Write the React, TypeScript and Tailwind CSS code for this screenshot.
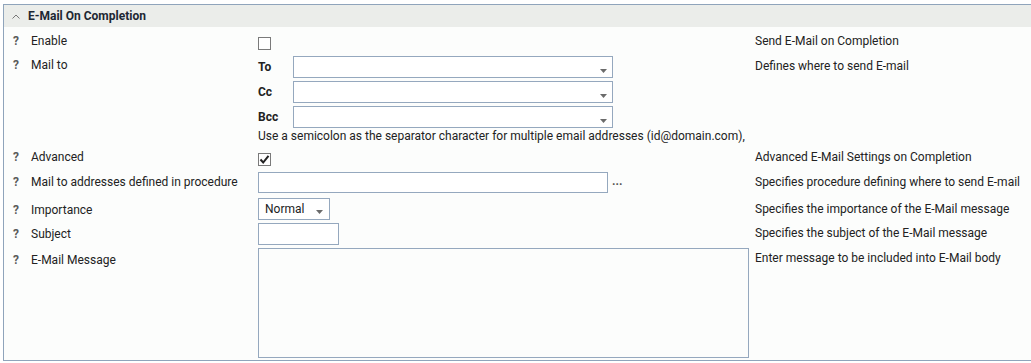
import React from "react";

const inputBorder = "border border-[#95a8be]";

function Caret({ className = "" }: { className?: string }) {
  return (
    <svg width="7" height="4" viewBox="0 0 7 4" className={className}>
      <polygon points="0,0 7,0 3.5,4" fill="#6b6b6b" />
    </svg>
  );
}

function Q() {
  return <span className="w-[18px] shrink-0 font-bold text-[#5a5a5a]">?</span>;
}

function Label({ text, pt }: { text: string; pt: string }) {
  return (
    <div className={`w-[254px] shrink-0 flex pl-[9px] ${pt}`}>
      <Q />
      <span>{text}</span>
    </div>
  );
}

function Checkbox({ checked }: { checked?: boolean }) {
  return (
    <div className="w-[13px] h-[13px] border border-[#7a7a7a] bg-white flex items-center justify-center">
      {checked && (
        <svg width="11" height="11" viewBox="0 0 11 11">
          <polyline points="1.5,5.5 4.2,8.5 9.5,1.8" fill="none" stroke="#222" strokeWidth="2" />
        </svg>
      )}
    </div>
  );
}

function Combo() {
  return (
    <div className={`w-[320px] h-[22px] ${inputBorder} bg-white flex items-end justify-end pr-[5px] pb-[4px]`}>
      <Caret />
    </div>
  );
}

function Desc({ text, pt }: { text: string; pt: string }) {
  return <div className={`flex-1 ${pt}`}>{text}</div>;
}

export default function App() {
  return (
    <div
      className="w-[1031px] h-[363px] bg-white pt-[4px] pl-[3px] text-[12px] leading-[16px] text-[#222]"
      style={{ fontFamily: "Roboto, 'Liberation Sans', sans-serif" }}
    >
      <div className="border-t border-l border-b border-[#8fa4bb] bg-[#fcfdfc]">
        <div className="h-[22px] bg-[#ebedea] flex items-center pl-[8px]">
          <svg width="8" height="5" viewBox="0 0 8 5" className="mr-[8px] mt-[1px]">
            <polyline points="0.5,4.5 4,1 7.5,4.5" fill="none" stroke="#777" strokeWidth="1" />
          </svg>
          <span className="font-bold text-[#1d2733]">E-Mail On Completion</span>
        </div>

        {/* Enable */}
        <div className="h-[26px] flex">
          <Label text="Enable" pt="pt-[6px]" />
          <div className="w-[497px] shrink-0 pt-[10px]">
            <Checkbox />
          </div>
          <Desc text="Send E-Mail on Completion" pt="pt-[6px]" />
        </div>

        {/* Mail to */}
        <div className="h-[92px] flex">
          <Label text="Mail to" pt="pt-[4px]" />
          <div className="w-[497px] shrink-0 pt-[3px] flex flex-col">
            <div className="flex flex-col gap-[3px]">
              {["To", "Cc", "Bcc"].map((l) => (
                <div key={l} className="flex items-center">
                  <span className="w-[35px] font-bold">{l}</span>
                  <Combo />
                </div>
              ))}
            </div>
            <div className="whitespace-nowrap">
              Use a semicolon as the separator character for multiple email addresses (id@domain.com),
            </div>
          </div>
          <Desc text="Defines where to send E-mail" pt="pt-[5px]" />
        </div>

        {/* Advanced */}
        <div className="h-[25px] flex">
          <Label text="Advanced" pt="pt-[4px]" />
          <div className="w-[497px] shrink-0 pt-[8px]">
            <Checkbox checked />
          </div>
          <Desc text="Advanced E-Mail Settings on Completion" pt="pt-[4px]" />
        </div>

        {/* Mail to addresses */}
        <div className="h-[27px] flex">
          <Label text="Mail to addresses defined in procedure" pt="pt-[4px]" />
          <div className="w-[497px] shrink-0 pt-[2px] flex items-start">
            <div className={`w-[350px] h-[21px] ${inputBorder} bg-white`} />
            <span className="ml-[4px] mt-[1px] font-bold text-[#555]">...</span>
          </div>
          <Desc text="Specifies procedure defining where to send E-mail" pt="pt-[4px]" />
        </div>

        {/* Importance */}
        <div className="h-[25px] flex">
          <Label text="Importance" pt="pt-[5px]" />
          <div className="w-[497px] shrink-0 pt-[1px]">
            <div className={`w-[72px] h-[22px] ${inputBorder} bg-white flex items-center pl-[6px]`}>
              <span className="flex-1">Normal</span>
              <Caret className="mr-[6px] mt-[6px]" />
            </div>
          </div>
          <Desc text="Specifies the importance of the E-Mail message" pt="pt-[4px]" />
        </div>

        {/* Subject */}
        <div className="h-[25px] flex">
          <Label text="Subject" pt="pt-[4px]" />
          <div className="w-[497px] shrink-0 pt-[1px]">
            <div className={`w-[81px] h-[22px] ${inputBorder} bg-white`} />
          </div>
          <Desc text="Specifies the subject of the E-Mail message" pt="pt-[3px]" />
        </div>

        {/* Message */}
        <div className="h-[113px] flex">
          <Label text="E-Mail Message" pt="pt-[5px]" />
          <div className="w-[497px] shrink-0 pt-[1px]">
            <div className={`w-[491px] h-[110px] ${inputBorder} bg-[#fcfdfc]`} />
          </div>
          <Desc text="Enter message to be included into E-Mail body" pt="pt-[3px]" />
        </div>
      </div>
    </div>
  );
}
